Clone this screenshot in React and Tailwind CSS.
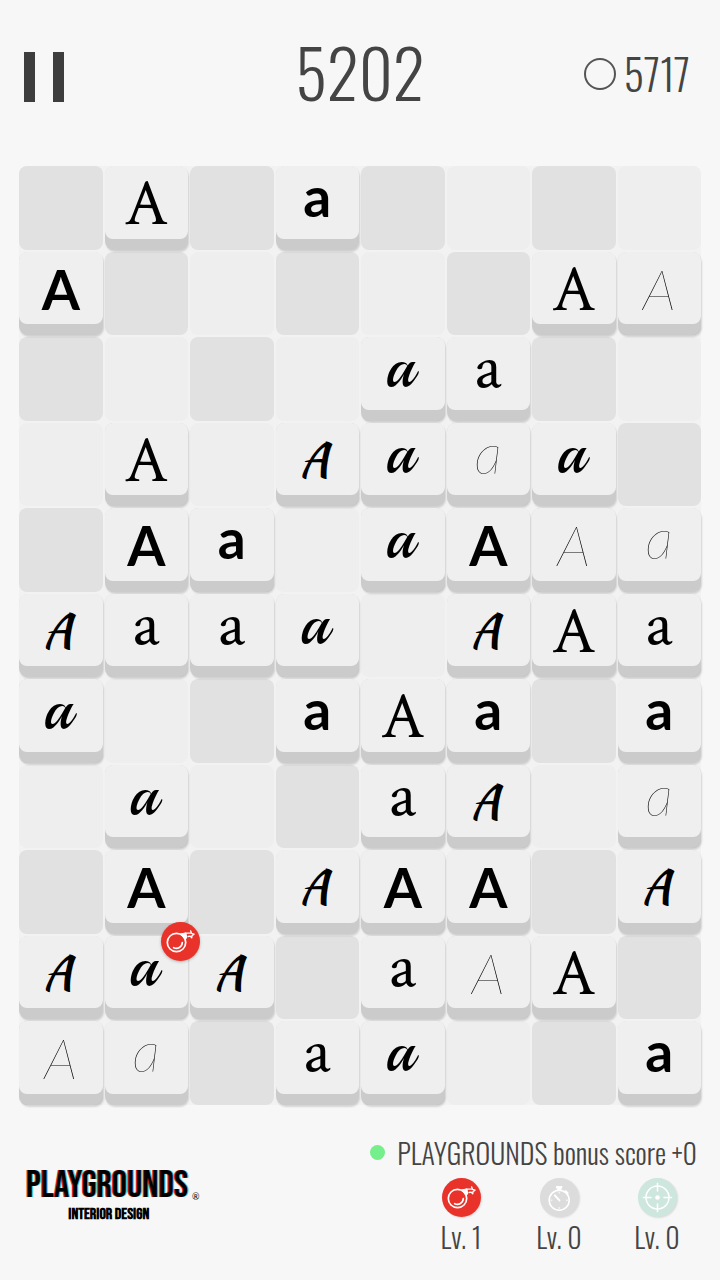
const BOARD = [
  [null, "serif:A", null, "bold:a", null, null, null, null],
  ["bold:A", null, null, null, null, null, "serif:A", "thin:A"],
  [null, null, null, null, "script:a", "serif:a", null, null],
  [null, "serif:A", null, "script:A", "script:a", "thin:a", "script:a", null],
  [null, "bold:A", "bold:a", null, "script:a", "bold:A", "thin:A", "thin:a"],
  ["script:A", "serif:a", "serif:a", "script:a", null, "script:A", "serif:A", "serif:a"],
  ["script:a", null, null, "bold:a", "serif:A", "bold:a", null, "bold:a"],
  [null, "script:a", null, null, "serif:a", "script:A", null, "thin:a"],
  [null, "bold:A", null, "script:A", "bold:A", "bold:A", null, "script:A"],
  ["script:A", "script:a:bomb", "script:A", null, "serif:a", "thin:A", "serif:A", null],
  ["thin:A", "thin:a", null, "serif:a", "script:a", null, null, "bold:a"],
];

const FACES = {
  serif: "font-['Crimson_Text','Liberation_Serif',serif] font-normal text-[66px]",
  bold: "font-['Lato',sans-serif] font-bold text-[55px]",
  thin: "font-['Lato',sans-serif] font-thin italic text-[56px]",
  scriptUpper: "font-['Kaushan_Script',cursive] font-normal text-[46px] pr-1.5",
  scriptLower: "font-['Playball',cursive] font-normal text-[60px] pr-1.5",
};

const BASELINES = {
  A: "h-[58px]",
  a: "h-[51px]",
  scriptUpper: "h-[52px]",
  scriptLower: "h-[49px]",
};

function BombIcon() {
  return (
    <svg viewBox="0 0 39 39" className="size-full" fill="none" stroke="white" strokeLinecap="round" aria-hidden="true">
      <circle cx="15.5" cy="20.5" r="9.2" strokeWidth="1.7" />
      <path d="M21.3 20.5a6 6 0 0 1-8.6 5.2" strokeWidth="1.7" />
      <path d="M19.8 11.8l5.2-.8.7 5-1.3 1.3z" fill="white" strokeWidth="1" />
      <path d="M24 11.2h6M29.6 8.8l1 2.6 2.4.8-2 1.4-.2 2.2-1.6-1.6-2.2.3" strokeWidth="1.3" strokeLinejoin="round" />
    </svg>
  );
}

function StopwatchIcon() {
  return (
    <svg viewBox="0 0 39 39" className="size-full" fill="none" stroke="white" strokeLinecap="round" aria-hidden="true">
      <circle cx="19.2" cy="22.2" r="10" strokeWidth="1.6" />
      <path d="M16.5 8.6h5.6l-1.6 3.4h-2.4z" fill="white" strokeWidth="1" />
      <path d="M14.8 17.4l4.6 5" strokeWidth="2" />
      <path d="M25.6 13.2l2 2" strokeWidth="2" />
      <path d="M19.2 14v1M19.2 29.5v1M11 22.2h1M26.4 22.2h1" strokeWidth="1" />
    </svg>
  );
}

function TargetIcon() {
  return (
    <svg viewBox="0 0 39 39" className="size-full" fill="none" stroke="white" strokeLinecap="round" aria-hidden="true">
      <circle cx="19.5" cy="19.5" r="11.5" strokeWidth="1.5" />
      <circle cx="19.5" cy="19.5" r="2.3" fill="white" stroke="none" />
      <path d="M19.5 5.5v7.5M19.5 26v7.5M5.5 19.5H13M26 19.5h7.5" strokeWidth="1.6" />
    </svg>
  );
}

function Tile({ value }) {
  const [face, letter, badge] = value.split(":");
  const key = face === "script" ? (letter === "A" ? "scriptUpper" : "scriptLower") : face;
  return (
    <button type="button" className="relative flex size-full flex-col rounded-[9px] bg-[#cbcbcb] pb-[11px] shadow-[1px_2px_2px_rgba(0,0,0,0.14)]">
      <span className="flex w-full flex-1 items-baseline justify-center rounded-lg bg-[#efefef] text-black">
        <span className={BASELINES[key] ?? BASELINES[letter]} />
        <span className={FACES[key]}>
          <span className="block leading-10">{letter}</span>
        </span>
      </span>
      {badge && (
        <span className="absolute -top-3.5 -right-3 z-10 size-[39px] rounded-full bg-[#e9322a] shadow-[0_1px_3px_rgba(0,0,0,0.25)]">
          <BombIcon />
        </span>
      )}
    </button>
  );
}

const POWERS = [
  { name: "Bomb", level: 1, color: "bg-[#e9322a]", Icon: BombIcon },
  { name: "Timer", level: 0, color: "bg-[#dcdcdc]", Icon: StopwatchIcon },
  { name: "Target", level: 0, color: "bg-[#cde6de]", Icon: TargetIcon },
];

export default function App() {
  return (
    <main className="min-h-screen bg-[#f7f7f7] font-['Oswald','Roboto_Condensed',sans-serif] font-light text-[#444444]">
      <header className="grid h-[148px] grid-cols-3 items-center px-6">
        <button type="button" aria-label="Pause" className="mt-1.5 flex gap-[18px] justify-self-start">
          <span className="h-[50px] w-[11px] bg-[#3d3d3d]" />
          <span className="h-[50px] w-[11px] bg-[#3d3d3d]" />
        </button>
        <h1 className="pb-1.5 text-center text-[66px] leading-none">5202</h1>
        <div className="flex items-center gap-2 justify-self-end pr-1.5">
          <span className="size-8 rounded-full border-2 border-[#555555]" />
          <span className="pb-0.5 text-[42px] leading-none">5717</span>
        </div>
      </header>

      <section aria-label="Board" className="px-[19px] pt-[18px]">
        <div className="grid grid-cols-8 gap-0.5 rounded-lg bg-[#f2f2f2]">
          {BOARD.map((row, r) =>
            row.map((value, c) => (
              <div
                key={`${r}-${c}`}
                className={`aspect-square rounded-lg ${(r + c) % 2 === 0 ? "bg-[#e1e1e1]" : "bg-[#eeeeee]"}`}
              >
                {value && <Tile value={value} />}
              </div>
            ))
          )}
        </div>
      </section>

      <footer className="flex justify-between pt-7 pr-[23px] pb-5 pl-[26px]">
        <div className="flex flex-col pt-[34px] font-['Bebas_Neue','Oswald',sans-serif] font-normal text-black">
          <div className="flex items-end gap-1">
            <span className="text-[38px] leading-[38px] [text-shadow:-1px_0_#e0303a,1px_0_#4cc4c4]">PLAYGROUNDS</span>
            <span className="font-['Lato',sans-serif] text-[9px] leading-4">®</span>
          </div>
          <span className="pr-2 text-center text-base leading-5 font-bold">INTERIOR DESIGN</span>
        </div>
        <div className="flex flex-col items-end gap-[5px]">
          <p className="flex items-center gap-3 text-[28px] leading-10">
            <span className="size-[15px] rounded-full bg-[#74ef8c]" />
            <span>PLAYGROUNDS bonus score +0</span>
          </p>
          <div className="flex gap-[18px]">
            {POWERS.map(({ name, level, color, Icon }) => (
              <button key={name} type="button" aria-label={`${name} Lv. ${level}`} className="flex w-20 flex-col items-center">
                <span className={`size-[39px] rounded-full shadow-[1px_1px_2px_rgba(0,0,0,0.12)] ${color}`}>
                  <Icon />
                </span>
                <span className="text-[28px] leading-10">Lv. {level}</span>
              </button>
            ))}
          </div>
        </div>
      </footer>
    </main>
  );
}
